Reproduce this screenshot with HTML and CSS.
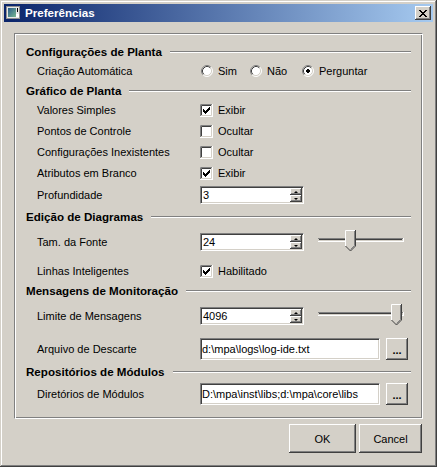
FILE: index.html
```html
<!DOCTYPE html>
<html>
<head>
<meta charset="utf-8">
<link rel="stylesheet" href="styles.css">
</head>
<body>
<div class="window">
  <div class="titlebar">
    <svg class="appicon" width="16" height="16" viewBox="0 0 16 16">
      <defs><linearGradient id="ig" x1="0" y1="0" x2="1" y2="1"><stop offset="0" stop-color="#2a5a8a"/><stop offset="1" stop-color="#78b890"/></linearGradient></defs>
      <rect x="0.5" y="1.5" width="13" height="12" fill="#e8e8e8" stroke="#909090"/>
      <rect x="2" y="3" width="8" height="9" fill="url(#ig)"/>
      <rect x="11" y="3" width="1" height="4" fill="#000"/>
      <rect x="10" y="9" width="3" height="3" fill="#fff"/>
    </svg>
    <span class="title">Preferências</span>
    <div class="closebtn raised">
      <svg width="8" height="7" viewBox="0 0 8 7"><path d="M0 0h2v1h-2z M6 0h2v1h-2z M1 1h2v1h-2z M5 1h2v1h-2z M2 2h4v1h-4z M3 3h2v1h-2z M2 4h4v1h-4z M1 5h2v1h-2z M5 5h2v1h-2z M0 6h2v1h-2z M6 6h2v1h-2z" fill="#000"/></svg>
    </div>
  </div>

  <div class="group">
    <div class="hdr"><span>Configurações de Planta</span><i class="rule"></i></div>
    <div class="row mt5">
      <span class="lbl">Criação Automática</span>
      <div class="radios">
        <span class="radio r-sim"><svg width="12" height="12" viewBox="0 0 12 12"><circle cx="6" cy="6" r="5" fill="#fff"/><path d="M2.11 9.89A5.5 5.5 0 0 1 9.89 2.11" stroke="#808080" fill="none"/><path d="M9.89 2.11A5.5 5.5 0 0 1 2.11 9.89" stroke="#fff" fill="none"/><path d="M2.82 9.18A4.5 4.5 0 0 1 9.18 2.82" stroke="#404040" fill="none"/><path d="M9.18 2.82A4.5 4.5 0 0 1 2.82 9.18" stroke="#d4d0c8" fill="none"/></svg>Sim</span>
        <span class="radio r-nao"><svg width="12" height="12" viewBox="0 0 12 12"><circle cx="6" cy="6" r="5" fill="#fff"/><path d="M2.11 9.89A5.5 5.5 0 0 1 9.89 2.11" stroke="#808080" fill="none"/><path d="M9.89 2.11A5.5 5.5 0 0 1 2.11 9.89" stroke="#fff" fill="none"/><path d="M2.82 9.18A4.5 4.5 0 0 1 9.18 2.82" stroke="#404040" fill="none"/><path d="M9.18 2.82A4.5 4.5 0 0 1 2.82 9.18" stroke="#d4d0c8" fill="none"/></svg>Não</span>
        <span class="radio"><svg width="12" height="12" viewBox="0 0 12 12"><circle cx="6" cy="6" r="5" fill="#fff"/><path d="M2.11 9.89A5.5 5.5 0 0 1 9.89 2.11" stroke="#808080" fill="none"/><path d="M9.89 2.11A5.5 5.5 0 0 1 2.11 9.89" stroke="#fff" fill="none"/><path d="M2.82 9.18A4.5 4.5 0 0 1 9.18 2.82" stroke="#404040" fill="none"/><path d="M9.18 2.82A4.5 4.5 0 0 1 2.82 9.18" stroke="#d4d0c8" fill="none"/><path d="M5 4h2v1h1v2h-1v1h-2v-1h-1v-2h1z" fill="#000"/></svg>Perguntar</span>
      </div>
    </div>

    <div class="hdr mt6"><span>Gráfico de Planta</span><i class="rule"></i></div>
    <div class="row mt5">
      <span class="lbl">Valores Simples</span>
      <span class="chk"><svg width="13" height="13" viewBox="0 0 13 13"><rect width="13" height="13" fill="#fff"/><path d="M0.5 12V0.5H12" stroke="#808080" fill="none"/><path d="M1.5 11V1.5H11" stroke="#404040" fill="none"/><path d="M0 12.5H12.5V0" stroke="#fff" fill="none"/><path d="M1 11.5H11.5V1" stroke="#d4d0c8" fill="none"/><path transform="translate(3,3)" d="M6 0h1v1h-1z M5 1h2v1h-2z M0 2h1v1h-1z M4 2h3v1h-3z M0 3h2v1h-2z M3 3h3v1h-3z M0 4h5v1h-5z M1 5h3v1h-3z M2 6h1v1h-1z" fill="#000"/></svg>Exibir</span>
    </div>
    <div class="row mt7">
      <span class="lbl">Pontos de Controle</span>
      <span class="chk"><svg width="13" height="13" viewBox="0 0 13 13"><rect width="13" height="13" fill="#fff"/><path d="M0.5 12V0.5H12" stroke="#808080" fill="none"/><path d="M1.5 11V1.5H11" stroke="#404040" fill="none"/><path d="M0 12.5H12.5V0" stroke="#fff" fill="none"/><path d="M1 11.5H11.5V1" stroke="#d4d0c8" fill="none"/></svg>Ocultar</span>
    </div>
    <div class="row mt7">
      <span class="lbl">Configurações Inexistentes</span>
      <span class="chk"><svg width="13" height="13" viewBox="0 0 13 13"><rect width="13" height="13" fill="#fff"/><path d="M0.5 12V0.5H12" stroke="#808080" fill="none"/><path d="M1.5 11V1.5H11" stroke="#404040" fill="none"/><path d="M0 12.5H12.5V0" stroke="#fff" fill="none"/><path d="M1 11.5H11.5V1" stroke="#d4d0c8" fill="none"/></svg>Ocultar</span>
    </div>
    <div class="row mt7">
      <span class="lbl">Atributos em Branco</span>
      <span class="chk"><svg width="13" height="13" viewBox="0 0 13 13"><rect width="13" height="13" fill="#fff"/><path d="M0.5 12V0.5H12" stroke="#808080" fill="none"/><path d="M1.5 11V1.5H11" stroke="#404040" fill="none"/><path d="M0 12.5H12.5V0" stroke="#fff" fill="none"/><path d="M1 11.5H11.5V1" stroke="#d4d0c8" fill="none"/><path transform="translate(3,3)" d="M6 0h1v1h-1z M5 1h2v1h-2z M0 2h1v1h-1z M4 2h3v1h-3z M0 3h2v1h-2z M3 3h3v1h-3z M0 4h5v1h-5z M1 5h3v1h-3z M2 6h1v1h-1z" fill="#000"/></svg>Exibir</span>
    </div>
    <div class="row tall mt6">
      <span class="lbl">Profundidade</span>
      <div class="spin"><span class="spin-text">3</span><div class="spin-btns"><div class="sb raised"><i class="up"></i></div><div class="sb raised"><i class="down"></i></div></div></div>
    </div>

    <div class="hdr mt6"><span>Edição de Diagramas</span><i class="rule"></i></div>
    <div class="row tall mt9">
      <span class="lbl">Tam. da Fonte</span>
      <div class="spin"><span class="spin-text">24</span><div class="spin-btns"><div class="sb raised"><i class="up"></i></div><div class="sb raised"><i class="down"></i></div></div></div>
      <svg class="slider" width="86" height="22" viewBox="0 0 86 22">
        <path d="M0 8.5H85" stroke="#808080"/><path d="M1 9.5H84" stroke="#404040"/><path d="M0 11.5H86M85.5 8V12" stroke="#fff"/>
        <g transform="translate(27,0)">
          <polygon points="0,0 11,0 11,16 5.5,21.5 0,16" fill="#d4d0c8"/>
          <path d="M0.5 16V0.5H10" stroke="#fff" fill="none"/>
          <path d="M9.5 1V15.5L5.5 19.5" stroke="#808080" fill="none"/>
          <path d="M10.5 0V16L5.5 21L0.5 16" stroke="#404040" fill="none"/>
        </g>
      </svg>
    </div>
    <div class="row mt13">
      <span class="lbl">Linhas Inteligentes</span>
      <span class="chk"><svg width="13" height="13" viewBox="0 0 13 13"><rect width="13" height="13" fill="#fff"/><path d="M0.5 12V0.5H12" stroke="#808080" fill="none"/><path d="M1.5 11V1.5H11" stroke="#404040" fill="none"/><path d="M0 12.5H12.5V0" stroke="#fff" fill="none"/><path d="M1 11.5H11.5V1" stroke="#d4d0c8" fill="none"/><path transform="translate(3,3)" d="M6 0h1v1h-1z M5 1h2v1h-2z M0 2h1v1h-1z M4 2h3v1h-3z M0 3h2v1h-2z M3 3h3v1h-3z M0 4h5v1h-5z M1 5h3v1h-3z M2 6h1v1h-1z" fill="#000"/></svg>Habilitado</span>
    </div>

    <div class="hdr mt6"><span>Mensagens de Monitoração</span><i class="rule"></i></div>
    <div class="row tall mt9">
      <span class="lbl">Limite de Mensagens</span>
      <div class="spin"><span class="spin-text">4096</span><div class="spin-btns"><div class="sb raised"><i class="up"></i></div><div class="sb raised"><i class="down"></i></div></div></div>
      <svg class="slider" width="86" height="22" viewBox="0 0 86 22">
        <path d="M0 8.5H85" stroke="#808080"/><path d="M1 9.5H84" stroke="#404040"/><path d="M0 11.5H86M85.5 8V12" stroke="#fff"/>
        <g transform="translate(73,0)">
          <polygon points="0,0 11,0 11,16 5.5,21.5 0,16" fill="#d4d0c8"/>
          <path d="M0.5 16V0.5H10" stroke="#fff" fill="none"/>
          <path d="M9.5 1V15.5L5.5 19.5" stroke="#808080" fill="none"/>
          <path d="M10.5 0V16L5.5 21L0.5 16" stroke="#404040" fill="none"/>
        </g>
      </svg>
    </div>
    <div class="row edrow mt13">
      <span class="lbl">Arquivo de Descarte</span>
      <div class="edit">d:\mpa\logs\log-ide.txt</div>
      <div class="dots raised">...</div>
    </div>

    <div class="hdr mt5"><span>Repositórios de Módulos</span><i class="rule"></i></div>
    <div class="row edrow mt4">
      <span class="lbl">Diretórios de Módulos</span>
      <div class="edit">D:\mpa\inst\libs;d:\mpa\core\libs</div>
      <div class="dots raised">...</div>
    </div>
  </div>

  <div class="btnrow">
    <div class="btn raised ok">OK</div>
    <div class="btn raised cancel">Cancel</div>
  </div>
</div>
</body>
</html>
```

FILE: styles.css
```css
html, body {
  margin: 0;
  padding: 0;
}
body {
  font-family: "Liberation Sans", Arial, sans-serif;
  font-size: 11px;
  color: #000;
  background: #d4d0c8;
}
.window {
  width: 437px;
  height: 467px;
  box-sizing: border-box;
  padding: 4px;
  background: #d4d0c8;
  box-shadow: inset -1px -1px #404040, inset 1px 1px #d4d0c8, inset -2px -2px #808080, inset 2px 2px #fff;
}
.raised {
  background: #d4d0c8;
  box-shadow: inset -1px -1px #404040, inset 1px 1px #fff, inset -2px -2px #808080, inset 2px 2px #d4d0c8;
}
.titlebar {
  height: 18px;
  display: flex;
  align-items: center;
  padding: 0 2px;
  background: linear-gradient(to right, #0a246a, #a6caf0);
  color: #fff;
}
.appicon {
  flex: none;
  display: block;
}
.title {
  flex: 1;
  margin-left: 3px;
  font-weight: bold;
  font-size: 11.6px;
  line-height: 18px;
}
.closebtn {
  width: 16px;
  height: 14px;
  display: flex;
  align-items: center;
  justify-content: center;
  flex: none;
}
.closebtn svg {
  display: block;
  margin-left: -1px;
}
.group {
  margin: 11px 0 0 10px;
  width: 409px;
  height: 386px;
  box-sizing: border-box;
  border-style: solid;
  border-width: 1px;
  border-color: #808080 #fff #fff #808080;
  box-shadow: inset 1px 1px #fff, inset -1px -1px #808080;
  padding: 11px 11px 0 11px;
}
.hdr {
  display: flex;
  align-items: center;
  height: 14px;
  line-height: 14px;
  font-weight: bold;
  font-size: 11.6px;
  white-space: nowrap;
}
.rule {
  flex: 1;
  height: 0;
  margin-left: 8px;
  margin-top: -1px;
  border-top: 1px solid #808080;
  border-bottom: 1px solid #fff;
}
.row {
  display: flex;
  align-items: center;
  height: 14px;
  line-height: 14px;
  padding-left: 11px;
  white-space: nowrap;
}
.row.tall {
  height: 18px;
}
.row.edrow {
  height: 22px;
}
.lbl {
  width: 163px;
  flex: none;
}
.mt4 { margin-top: 4px; }
.mt5 { margin-top: 5px; }
.mt6 { margin-top: 6px; }
.mt7 { margin-top: 7px; }
.mt9 { margin-top: 9px; }
.mt13 { margin-top: 13px; }

.radios {
  display: flex;
  align-items: center;
  padding-left: 1px;
}
.radio {
  display: flex;
  align-items: center;
  gap: 5px;
}
.radio svg, .chk svg {
  display: block;
  flex: none;
}
.r-sim { width: 49px; }
.r-nao { width: 52px; }
.chk {
  display: flex;
  align-items: center;
  gap: 5px;
}
.spin {
  width: 104px;
  height: 18px;
  box-sizing: border-box;
  display: flex;
  border: 1px solid;
  border-color: #808080 #fff #fff #808080;
  padding: 1px;
  background: #fff;
  box-shadow: inset 1px 1px #404040, inset -1px -1px #d4d0c8;
}
.spin-text {
  flex: 1;
  line-height: 14px;
  padding-left: 1px;
}
.spin-btns {
  width: 12px;
  display: flex;
  flex-direction: column;
}
.sb {
  flex: 1;
  display: flex;
  align-items: center;
  justify-content: center;
}
.up, .down {
  width: 0;
  height: 0;
  border-left: 2px solid transparent;
  border-right: 2px solid transparent;
}
.up { border-bottom: 2px solid #000; }
.down { border-top: 2px solid #000; }
.slider {
  display: block;
  flex: none;
  align-self: flex-start;
  margin-top: -3px;
  margin-left: 14px;
}
.edit {
  width: 180px;
  height: 22px;
  box-sizing: border-box;
  border: 1px solid;
  border-color: #808080 #fff #fff #808080;
  background: #fff;
  box-shadow: inset 1px 1px #404040, inset -1px -1px #d4d0c8;
  padding-left: 1px;
  line-height: 20px;
  overflow: hidden;
}
.dots {
  width: 22px;
  height: 22px;
  margin-left: 6px;
  display: flex;
  align-items: center;
  justify-content: center;
  font-weight: bold;
  line-height: 14px;
  padding-top: 2px;
  box-sizing: border-box;
}
.btnrow {
  display: flex;
  justify-content: flex-end;
  gap: 3px;
  margin-top: 5px;
  padding-right: 11px;
}
.btn {
  height: 29px;
  display: flex;
  align-items: center;
  justify-content: center;
}
.ok { width: 67px; }
.cancel { width: 63px; }
```
